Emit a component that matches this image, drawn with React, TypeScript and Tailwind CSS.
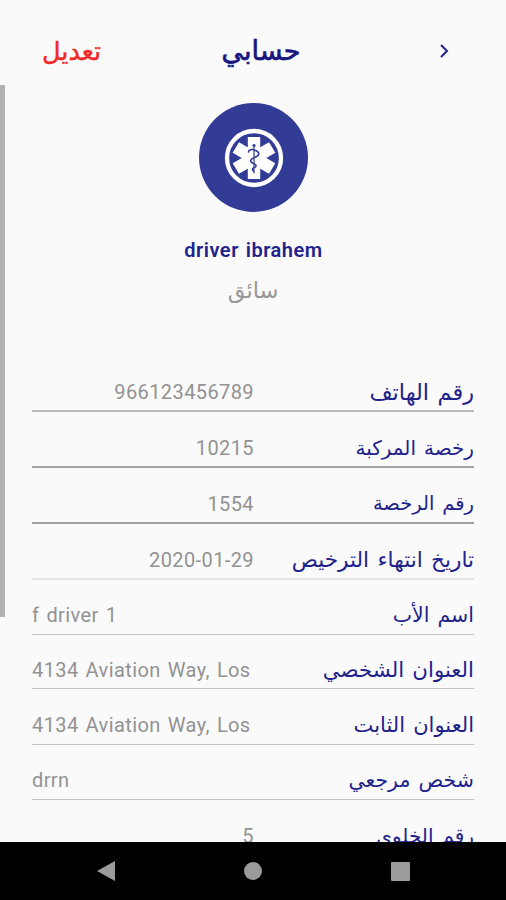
import clsx from "clsx";

type Field = {
  label: string;
  value: string;
  labelClass: string;
  rowClass: string;
  start?: boolean;
};

const fields: Field[] = [
  { label: "رقم الهاتف", value: "966123456789", labelClass: "text-[22.4px]", rowClass: "h-14 border-b-2 border-[#b9b9b9] pb-[5px]" },
  { label: "رخصة المركبة", value: "10215", labelClass: "text-[20px]", rowClass: "h-14 border-b-2 border-[#a3a3a3] pb-[5px]" },
  { label: "رقم الرخصة", value: "1554", labelClass: "text-[19.5px]", rowClass: "h-14 border-b-2 border-[#a0a0a0] pb-[5px]" },
  { label: "تاريخ انتهاء الترخيص", value: "2020-01-29", labelClass: "text-[21.6px]", rowClass: "h-14 border-b-2 border-[#e2e2e2] pb-[5px]" },
  { label: "اسم الأب", value: "f driver 1", start: true, labelClass: "text-[20.5px]", rowClass: "h-[55px] border-b border-[#c4c4c4] pb-1.5" },
  { label: "العنوان الشخصي", value: "4134 Aviation Way, Los", start: true, labelClass: "text-[21.3px]", rowClass: "h-[54px] border-b border-[#c4c4c4] pb-[5px]" },
  { label: "العنوان الثابت", value: "4134 Aviation Way, Los", start: true, labelClass: "text-[21px]", rowClass: "h-14 border-b border-[#c4c4c4] pb-1.5" },
  { label: "شخص مرجعي", value: "drrn", start: true, labelClass: "text-[20.5px]", rowClass: "h-[55px] border-b border-[#c4c4c4] pb-1.5" },
  { label: "رقم الخلوي", value: "5", labelClass: "text-[20px]", rowClass: "h-14 pb-[7px]" },
];

const FieldRow = ({ field }: { field: Field }) => (
  <div className={clsx("flex shrink-0 items-end justify-between", field.rowClass)}>
    <span
      dir="ltr"
      className={clsx(
        "w-[222px] whitespace-nowrap text-[20px] leading-[26px] tracking-[0.4px] text-[#929292] [word-spacing:1.7px]",
        field.start ? "text-left" : "text-right"
      )}
    >
      {field.value}
    </span>
    <span
      dir="rtl"
      className={clsx("whitespace-nowrap leading-[26px] text-[#22228c] [word-spacing:3px]", field.labelClass)}
    >
      {field.label}
    </span>
  </div>
);

const Header = () => (
  <header className="grid h-[85px] shrink-0 grid-cols-3 items-center px-[42px] pt-4">
    <span dir="rtl" className="justify-self-start text-[25.5px] leading-8 text-[#f02828] [-webkit-text-stroke:0.4px_#f02828]">
      تعديل
    </span>
    <h1
      dir="rtl"
      className="ml-4 justify-self-center text-[27px] leading-8 text-[#17177f] [-webkit-text-stroke:0.7px_#17177f]"
    >
      حسابي
    </h1>
    <svg viewBox="0 0 10 16" className="mr-[15px] h-4 w-2.5 justify-self-end" fill="none" stroke="#22228c" strokeWidth="2">
      <path d="M2 2l6 6-6 6" />
    </svg>
  </header>
);

const StarOfLife = () => (
  <svg viewBox="0 0 60 60" className="ml-px size-[60px]" fill="none">
    <circle cx="30" cy="30" r="27" stroke="#fff" strokeWidth="4.3" />
    <g fill="#fff">
      <rect x="23.8" y="9" width="12.4" height="42" />
      <rect x="23.8" y="9" width="12.4" height="42" transform="rotate(60 30 30)" />
      <rect x="23.8" y="9" width="12.4" height="42" transform="rotate(-60 30 30)" />
    </g>
    <g stroke="#323c96" strokeLinecap="round">
      <path d="M30 17v28" strokeWidth="1.2" />
      <path
        d="M24.600 24c-.5-2.500 4-3 6.400-1.800 5 1.500 5 5.300 0 7-5 2-5.500 4.300-2.500 5.800 4.500 1.300 4.500 3.500 1.500 4.800-2 1.200-2 2.200-.5 3.200"
        strokeWidth="1.6"
      />
    </g>
    <circle cx="30" cy="17.5" r="1.6" fill="#323c96" />
  </svg>
);

const Profile = () => (
  <section className="flex shrink-0 flex-col items-center pt-[18px]">
    <div className="flex size-[109px] items-center justify-center rounded-full bg-[#323c96]">
      <StarOfLife />
    </div>
    <p className="mt-6 ml-px text-[20px] leading-7 font-semibold tracking-[0.5px] text-[#22228c] [word-spacing:1.5px]">
      driver ibrahem
    </p>
    <p dir="rtl" className="mt-3 text-[22.5px] leading-7 text-[#979797]">
      سائق
    </p>
  </section>
);

const NavBar = () => (
  <nav className="grid h-[58px] shrink-0 grid-cols-3 items-center justify-items-center bg-black px-8">
    <svg viewBox="0 0 18 22" className="h-[22px] w-[18px]" fill="#9b9b9b">
      <path d="M18 1v20L0 11z" />
    </svg>
    <span className="size-[18px] rounded-full bg-[#9b9b9b]" />
    <span className="size-[19px] rounded-[1px] bg-[#9b9b9b]" />
  </nav>
);

export default function App() {
  return (
    <div className="relative flex h-[900px] w-[506px] flex-col overflow-hidden bg-[#fafafa] font-[Roboto,'DejaVu_Sans',sans-serif]">
      <Header />
      <main className="flex min-h-0 flex-1 flex-col overflow-hidden">
        <Profile />
        <div className="mt-[52px] flex flex-col px-8">
          {fields.map((field, i) => (
            <FieldRow key={i} field={field} />
          ))}
        </div>
      </main>
      <NavBar />
      <div className="absolute top-[85px] left-0 h-[532px] w-[5px] bg-[#b2b2b2]" />
    </div>
  );
}
